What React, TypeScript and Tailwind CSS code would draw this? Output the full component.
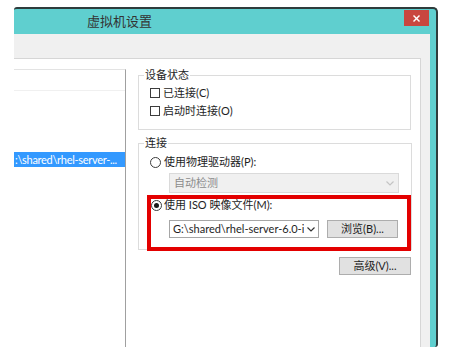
const ChevronDown = ({ color }: { color: string }) => (
  <svg width="8" height="5" viewBox="0 0 8 5" fill="none">
    <polyline points="0.5,0.5 4,4 7.5,0.5" stroke={color} strokeWidth="1.2" />
  </svg>
);

const CheckBox = () => <div className="h-[10px] w-[10px] shrink-0 border border-[#3c3c3c] bg-white" />;

const Radio = ({ checked }: { checked?: boolean }) => (
  <div className="flex h-[11px] w-[11px] shrink-0 items-center justify-center rounded-full border border-[#3c3c3c] bg-white">
    {checked && <div className="h-[5px] w-[5px] rounded-full bg-[#1a1a1a]" />}
  </div>
);

export default function App() {
  return (
    <div className="h-[357px] w-[452px] overflow-hidden bg-white pl-[14px] pt-[7px] font-['Lato','Noto_Sans_CJK_SC',sans-serif] text-[#1e1e1e]">
      <div className="flex h-[340px] w-[424px] flex-col rounded-tl-[3px] rounded-tr-[5px] rounded-br-[3px] border-t-2 border-r-2 border-[#2e3c3c] bg-[#5fcfcf]">
        {/* Title bar */}
        <div className="flex h-[25px] items-start">
          <div className="ml-[73px] mt-[6px] text-[13px] leading-[13px] text-[#333]">虚拟机设置</div>
          <div className="ml-auto mr-[7px] mt-[1px] flex h-[16px] w-[25px] items-center justify-center bg-[#c9463f]">
            <svg width="7" height="7" viewBox="0 0 7 7">
              <line x1="0.5" y1="0.5" x2="6.5" y2="6.5" stroke="white" strokeWidth="1.4" />
              <line x1="6.5" y1="0.5" x2="0.5" y2="6.5" stroke="white" strokeWidth="1.4" />
            </svg>
          </div>
        </div>

        {/* Body */}
        <div className="mr-[6px] flex flex-1 flex-col bg-[#f0f0f0] pt-[24px]">
          <div className="mr-[9px] flex flex-1 border-t border-r border-[#d6d6d6] bg-white">
            {/* Left list */}
            <div className="mt-[10px] w-[112px] border-t border-r border-t-[#e3e3e3] border-r-[#a0a0a0]">
              <div className="h-[21px] border-b border-[#f0f0f0]" />
              <div className="mt-[61px] h-[15px] overflow-hidden bg-[#3399ff] pl-[1px] text-[11px] leading-[15px] tracking-[-0.3px] whitespace-nowrap text-white">
                {":\\shared\\rhel-server-..."}
              </div>
            </div>

            {/* Right panel */}
            <div className="ml-[12px] mt-[10px] flex w-[273px] flex-col">
              <fieldset className="border border-[#dcdcdc] pt-[3px] pb-[9px] pl-[8px]">
                <legend className="ml-[-3px] px-[1px] text-[11px] leading-[12px]">设备状态</legend>
                <div className="ml-[3px] flex h-[18px] items-center gap-[3px] text-[11px]">
                  <CheckBox />
                  <span>已连接(C)</span>
                </div>
                <div className="ml-[3px] flex h-[18px] items-center gap-[3px] text-[11px]">
                  <CheckBox />
                  <span>启动时连接(O)</span>
                </div>
              </fieldset>

              <fieldset className="mt-[7px] border border-[#dcdcdc] pt-[4px] pl-[8px]">
                <legend className="ml-[-3px] px-[1px] text-[11px] leading-[12px]">连接</legend>
                <div className="ml-[3px] flex h-[18px] items-center gap-[3px] text-[11px]">
                  <Radio />
                  <span>使用物理驱动器(P):</span>
                </div>
                <div className="ml-[22px] mt-[2px] flex h-[20px] w-[230px] items-center justify-between border border-[#dadada] bg-[#f0f0f0] pl-[4px] pr-[4px] text-[11px] text-[#8c8c8c]">
                  <span>自动检测</span>
                  <ChevronDown color="#c4c4c4" />
                </div>

                <div className="mt-[2px] mb-[-2px] w-[264px] border-4 border-[#e30000]">
                  <div className="flex h-[12px] items-center gap-[2px] text-[11px]">
                    <Radio checked />
                    <span>使用 ISO 映像文件(M):</span>
                  </div>
                  <div className="mt-[9px] mb-[9px] flex pl-[18px]">
                    <div className="flex h-[18px] w-[150px] items-center border border-[#a6a6a6] bg-white text-[11px]">
                      <span className="w-[134px] overflow-hidden whitespace-nowrap pl-[3px]">
                        {"G:\\shared\\rhel-server-6.0-i3"}
                      </span>
                      <div className="flex w-[14px] shrink-0 justify-center">
                        <ChevronDown color="#333" />
                      </div>
                    </div>
                    <div className="ml-[8px] flex h-[18px] w-[71px] items-center justify-center border border-[#adadad] bg-[#e1e1e1] text-[11px]">
                      浏览(B)...
                    </div>
                  </div>
                </div>
              </fieldset>

              <div className="mt-[7px] flex h-[18px] w-[72px] items-center justify-center self-end border border-[#adadad] bg-[#e1e1e1] text-[11px]">
                高级(V)...
              </div>
            </div>
          </div>
        </div>
      </div>
    </div>
  );
}
